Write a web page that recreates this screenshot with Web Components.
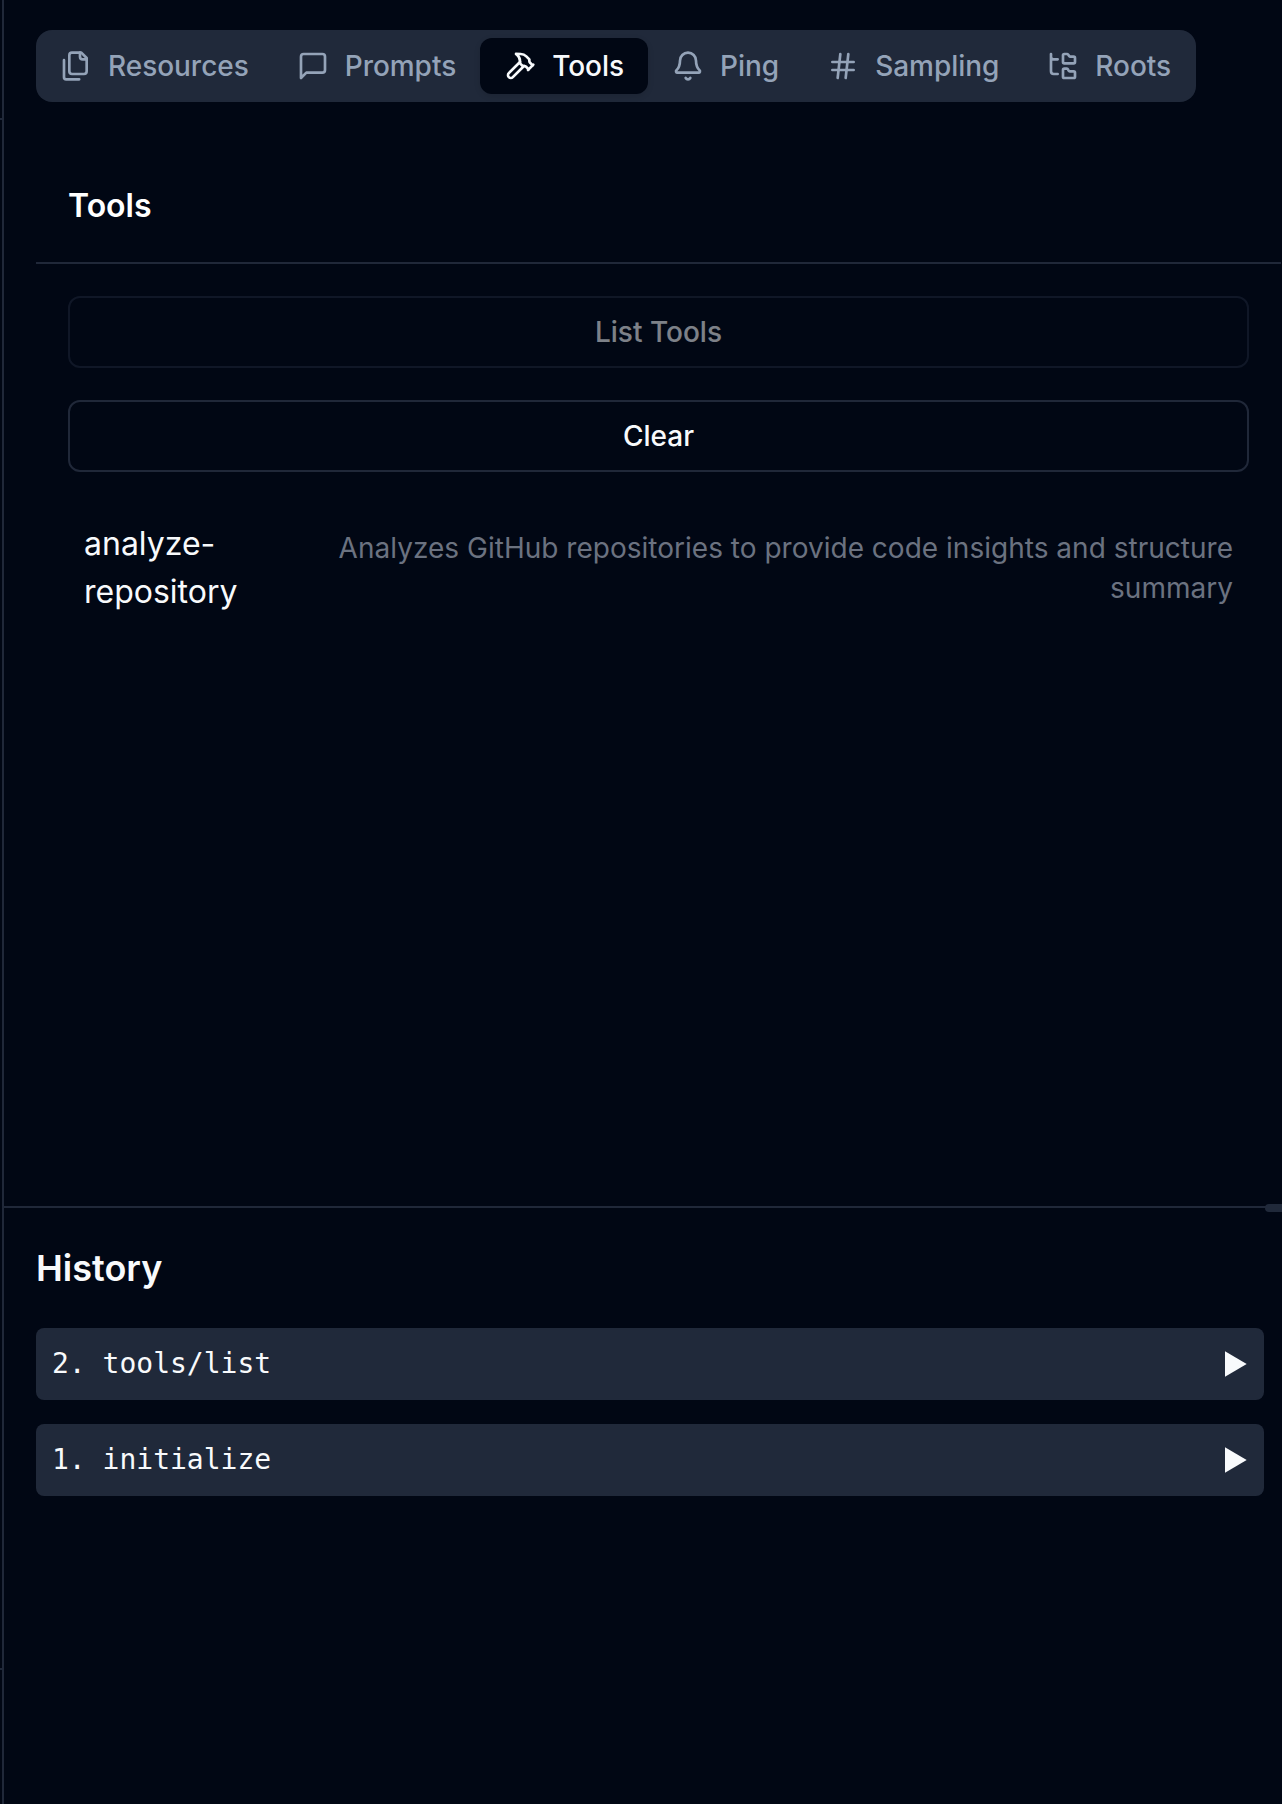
<!DOCTYPE html>
<html lang="en">
<head>
<meta charset="utf-8">
<title>Inspector</title>
<style>
html, body { margin: 0; height: 100%; }
body {
  --bg: #010714; --line: #202839; --muted: #20293a; --muted-fg: #94a3b8; --fg: #f8fafc; --gray: #6b7280;
  background: var(--bg); color: var(--fg); font-family: Inter, "Liberation Sans", sans-serif; overflow: hidden;
}
</style>
</head>
<body>
<inspector-app></inspector-app>
<script>
const define = (name, html) => customElements.define(name, class extends HTMLElement {
  constructor() {
    super();
    const t = document.createElement('template');
    t.innerHTML = html;
    this.attachShadow({ mode: 'open' }).append(t.content.cloneNode(true));
  }
});

const ICONS = {
  files: '<path d="M20 7h-3a2 2 0 0 1-2-2V2"/><path d="M9 18a2 2 0 0 1-2-2V4a2 2 0 0 1 2-2h7l4 4v10a2 2 0 0 1-2 2Z"/><path d="M3 7.6v12.8A1.6 1.6 0 0 0 4.6 22h9.8"/>',
  message: '<path d="M21 15a2 2 0 0 1-2 2H7l-4 4V5a2 2 0 0 1 2-2h14a2 2 0 0 1 2 2z"/>',
  hammer: '<path d="m15 12-8.373 8.373a1 1 0 1 1-3-3L12 9"/><path d="m18 15 4-4"/><path d="m21.5 11.5-1.914-1.914A2 2 0 0 1 19 8.172V7l-2.26-2.26a6 6 0 0 0-4.202-1.756L9 2.96l.92.82A6.18 6.18 0 0 1 12 8.4V10l2 2h1.172a2 2 0 0 1 1.414.586L18.5 14.5"/>',
  bell: '<path d="M10.268 21a2 2 0 0 0 3.464 0"/><path d="M3.262 15.326A1 1 0 0 0 4 17h16a1 1 0 0 0 .74-1.673C19.41 13.956 18 12.499 18 8A6 6 0 0 0 6 8c0 4.499-1.411 5.956-2.738 7.326"/>',
  hash: '<path d="M4 9h16M4 15h16M10 3 8 21M16 3l-2 18"/>',
  tree: '<path d="M20 10a1 1 0 0 0 1-1V6a1 1 0 0 0-1-1h-2.500a1 1 0 0 1-.8-.4l-.9-1.200A1 1 0 0 0 15 3h-2a1 1 0 0 0-1 1v5a1 1 0 0 0 1 1Z"/><path d="M20 21a1 1 0 0 0 1-1v-3a1 1 0 0 0-1-1h-2.900a1 1 0 0 1-.88-.55l-.42-.85a1 1 0 0 0-.92-.6H13a1 1 0 0 0-1 1v5a1 1 0 0 0 1 1Z"/><path d="M3 5a2 2 0 0 0 2 2h3M3 3v13a2 2 0 0 0 2 2h3"/>'
};

customElements.define('tab-item', class extends HTMLElement {
  constructor() {
    super();
    this.attachShadow({ mode: 'open' }).innerHTML = `<style>
      :host { display: flex; align-items: center; gap: 16px; height: 56px; padding: 0 24px; box-sizing: border-box;
        border-radius: 12px; font-size: 28px; line-height: 40px; font-weight: 500; letter-spacing: -.035px; color: var(--muted-fg); white-space: nowrap; }
      :host([active]) { background: var(--bg); color: var(--fg); box-shadow: 0 2px 6px rgb(0 0 0 / .12); }
      svg { width: 32px; height: 32px; flex: none; fill: none; stroke: currentColor; stroke-width: 2; stroke-linecap: round; stroke-linejoin: round; }
    </style><svg viewBox="0 0 24 24">${ICONS[this.getAttribute('icon')]}</svg><span><slot></slot></span>`;
  }
});

define('tab-bar', `<style>
  :host { display: flex; align-items: center; width: 1160px; height: 72px; background: var(--muted); border-radius: 16px; }
</style><slot></slot>`);

define('outline-button', `<style>
  :host { display: flex; align-items: center; justify-content: center; height: 72px; box-sizing: border-box;
    border: 2px solid var(--line); border-radius: 12px; font-size: 28px; line-height: 40px; font-weight: 500; }
  :host([disabled]) { opacity: .5; }
</style><span><slot></slot></span>`);

define('tool-item', `<style>
  :host { display: flex; align-items: center; justify-content: space-between; padding: 16px; }
  .name { width: 180px; font-size: 32px; line-height: 48px; }
  .desc { width: 920px; font-size: 28px; line-height: 40px; letter-spacing: .015px; text-align: right; color: var(--gray); }
</style><span class="name"><slot name="name"></slot></span><span class="desc"><slot></slot></span>`);

define('list-pane', `<style>
  :host { display: block; }
  header { padding: 32px; border-bottom: 2px solid var(--line); }
  h3 { margin: 0; font-size: 32px; line-height: 48px; font-weight: 600; color: #fff; }
  .body { display: flex; flex-direction: column; gap: 32px; padding: 32px; }
</style><header><h3><slot name="title"></slot></h3></header><div class="body"><slot></slot></div>`);

define('history-item', `<style>
  :host { display: flex; align-items: center; justify-content: space-between; height: 72px; box-sizing: border-box; padding: 0 17px 0 16px;
    background: var(--muted); border-radius: 8px; font: 28px/40px "DejaVu Sans Mono", monospace; }
  svg { display: block; width: 22px; height: 26px; fill: currentColor; }
</style><span><slot></slot></span><svg viewBox="0 0 22 26"><path d="M0 .2 21.700 13 0 25.800Z"/></svg>`);

define('history-pane', `<style>
  :host { display: block; position: relative; flex: 1; border-top: 2px solid var(--line); padding: 32px 18px 32px 32px; }
  h2 { margin: 0 0 32px; font-size: 36px; line-height: 56px; font-weight: 600; }
  .rows { display: flex; flex-direction: column; gap: 24px; }
  .grip { position: absolute; top: -4px; right: -20px; width: 37px; height: 8px; border-radius: 4px; background: var(--muted); }
</style><div class="grip"></div><h2><slot name="title"></slot></h2><div class="rows"><slot></slot></div>`);

define('side-edge', `<style>
  :host { display: flex; flex-direction: column; width: 2px; flex: none; border-right: 2px solid var(--line); }
  i { height: 2px; background: var(--line); }
  .a { margin-top: 118px; } .b { margin-top: 1548px; }
</style><i class="a"></i><i class="b"></i>`);

define('inspector-app', `<style>
  :host { display: flex; width: 100%; height: 1804px; overflow: hidden; }
  main { flex: 1; min-width: 0; display: flex; flex-direction: column; }
  .top { height: 1176px; padding: 30px 1px 0 32px; }
  list-pane { margin-top: 48px; }
</style>
<side-edge></side-edge>
<main>
  <div class="top">
    <tab-bar>
      <tab-item icon="files">Resources</tab-item>
      <tab-item icon="message">Prompts</tab-item>
      <tab-item icon="hammer" active>Tools</tab-item>
      <tab-item icon="bell">Ping</tab-item>
      <tab-item icon="hash">Sampling</tab-item>
      <tab-item icon="tree">Roots</tab-item>
    </tab-bar>
    <list-pane>
      <span slot="title">Tools</span>
      <outline-button disabled>List Tools</outline-button>
      <outline-button>Clear</outline-button>
      <tool-item><span slot="name">analyze-repository</span>Analyzes GitHub repositories to provide code insights and structure summary</tool-item>
    </list-pane>
  </div>
  <history-pane>
    <span slot="title">History</span>
    <history-item>2. tools/list</history-item>
    <history-item>1. initialize</history-item>
  </history-pane>
</main>`);
</script>
</body>
</html>
